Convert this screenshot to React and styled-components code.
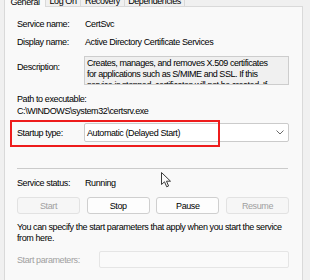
import React from 'react'
import styled, { createGlobalStyle } from 'styled-components'

const GlobalStyle = createGlobalStyle`
  html, body {
    margin: 0;
    padding: 0;
    background: #f0f0f0;
  }
  body {
    font-family: "Liberation Sans", Arial, sans-serif;
    font-size: 9px;
    letter-spacing: -0.4px;
    color: #000;
  }
`

const Frame = styled.div`
  position: relative;
  width: 310px;
  height: 280px;
  overflow: hidden;
  background: #f0f0f0;
  padding-left: 4px;
  box-sizing: border-box;
`

const TabStrip = styled.div`
  display: flex;
  width: 299px;
  height: 7px;
`

const Tab = styled.div`
  box-sizing: border-box;
  width: ${p => p.$w}px;
  display: flex;
  align-items: flex-end;
  justify-content: center;
  overflow: hidden;
  background: ${p => (p.$active ? '#f9f9f9' : '#f0f0f0')};
  border-right: 1px solid #d9d9d9;
  border-left: ${p => (p.$active ? '1px solid #d9d9d9' : 'none')};
  border-bottom: ${p => (p.$active ? 'none' : '1px solid #d9d9d9')};

  span {
    line-height: 12px;
    margin-bottom: -1px;
    white-space: nowrap;
  }
`

const TabFiller = styled.div`
  flex: 1;
  border-bottom: 1px solid #d9d9d9;
`

const Panel = styled.div`
  box-sizing: border-box;
  width: 299px;
  height: 300px;
  background: #f9f9f9;
  border: 1px solid #d9d9d9;
  border-top: none;
  padding: 11px 13px 0 12px;
  display: flex;
  flex-direction: column;
`

const Row = styled.div`
  display: flex;
  align-items: ${p => p.$align || 'center'};
  line-height: 12px;
  margin-top: ${p => p.$mt || 0}px;
  position: relative;
`

const Label = styled.div`
  width: ${p => p.$w || 67}px;
  flex-shrink: 0;
  white-space: nowrap;
  color: ${p => (p.$muted ? '#a0a0a0' : '#000')};
  margin-top: ${p => p.$mt || 0}px;
`

const Value = styled.div`
  padding-left: 1px;
  white-space: nowrap;
`

const DescBox = styled.div`
  box-sizing: border-box;
  flex: 1;
  height: 29px;
  overflow: hidden;
  border: 1px solid #cdcdcd;
  background: #f0f0f0;
  padding: 1px 0 0 2px;
  letter-spacing: -0.45px;
  white-space: nowrap;
`

const TextLine = styled.div`
  line-height: ${p => p.$lh || 12}px;
  margin-top: ${p => p.$mt || 0}px;
  white-space: nowrap;
`

const Combo = styled.div`
  box-sizing: border-box;
  flex: 1;
  height: 19px;
  display: flex;
  align-items: center;
  justify-content: space-between;
  background: #fff;
  border: 1px solid #cbcbcb;
  border-radius: 2px;
  padding: 0 4px 0 2px;
`

const Highlight = styled.div`
  position: absolute;
  left: -7px;
  top: -3px;
  width: 210px;
  height: 27px;
  box-sizing: border-box;
  border: 2px solid #ee1c1c;
  pointer-events: none;
`

const Separator = styled.div`
  height: 1px;
  background: #cbcbcb;
  margin-top: 26px;
  margin-right: 1px;
`

const ButtonRow = styled.div`
  display: flex;
  justify-content: space-between;
  margin-top: 8px;
`

const Button = styled.div`
  box-sizing: border-box;
  width: 63px;
  height: 17px;
  display: flex;
  align-items: center;
  justify-content: center;
  border-radius: 3px;
  border: 1px solid ${p => (p.$disabled ? '#e2e2e2' : '#cfcfcf')};
  background: ${p => (p.$disabled ? '#f6f6f6' : '#fdfdfd')};
  color: ${p => (p.$disabled ? '#a0a0a0' : '#000')};
`

const Paragraph = styled.div`
  margin-top: 8px;
  line-height: 11px;
  white-space: nowrap;
`

const Input = styled.div`
  box-sizing: border-box;
  flex: 1;
  height: 17px;
  border: 1px solid #e5e5e5;
  border-radius: 2px;
  background: #fafafa;
`

const Cursor = styled.svg`
  position: absolute;
  left: 161px;
  top: 172px;
`

const Chevron = () => (
  <svg width="8" height="5" viewBox="0 0 8 5">
    <path d="M0.5 0.5 L4 4 L7.5 0.5" fill="none" stroke="#6a6a6a" strokeWidth="1" />
  </svg>
)

const App = () => (
  <Frame>
    <GlobalStyle />
    <TabStrip>
      <Tab $w={42} $active><span>General</span></Tab>
      <Tab $w={35}><span>Log On</span></Tab>
      <Tab $w={44}><span>Recovery</span></Tab>
      <Tab $w={60}><span>Dependencies</span></Tab>
      <TabFiller />
    </TabStrip>
    <Panel>
      <Row>
        <Label>Service name:</Label>
        <Value>CertSvc</Value>
      </Row>
      <Row $mt={6}>
        <Label>Display name:</Label>
        <Value>Active Directory Certificate Services</Value>
      </Row>
      <Row $mt={8} $align="flex-start">
        <Label $mt={5}>Description:</Label>
        <DescBox>
          <TextLine $lh={11}>Creates, manages, and removes X.509 certificates</TextLine>
          <TextLine $lh={11}>for applications such as S/MIME and SSL. If this</TextLine>
          <TextLine $lh={11}>service is stopped, certificates will not be created. If</TextLine>
        </DescBox>
      </Row>
      <TextLine $mt={8}>Path to executable:</TextLine>
      <TextLine>C:\WINDOWS\system32\certsrv.exe</TextLine>
      <Row $mt={6}>
        <Label>Startup type:</Label>
        <Combo>
          <span>Automatic (Delayed Start)</span>
          <Chevron />
        </Combo>
        <Highlight />
      </Row>
      <Separator />
      <Row $mt={8}>
        <Label>Service status:</Label>
        <Value>Running</Value>
      </Row>
      <ButtonRow>
        <Button $disabled>Start</Button>
        <Button>Stop</Button>
        <Button>Pause</Button>
        <Button $disabled>Resume</Button>
      </ButtonRow>
      <Paragraph>
        You can specify the start parameters that apply when you start the service
        <br />
        from here.
      </Paragraph>
      <Row $mt={7}>
        <Label $w={82} $muted>Start parameters:</Label>
        <Input />
      </Row>
    </Panel>
    <Cursor width="11" height="16" viewBox="0 0 11 16">
      <path
        d="M0.5 0.5 L0.5 12.5 L3.5 9.8 L5.7 14.8 L7.6 14 L5.5 9.2 L9.5 9.2 Z"
        fill="#fafafa"
        stroke="#3a3a3a"
        strokeWidth="1"
        strokeLinejoin="round"
      />
    </Cursor>
  </Frame>
)

export default App
